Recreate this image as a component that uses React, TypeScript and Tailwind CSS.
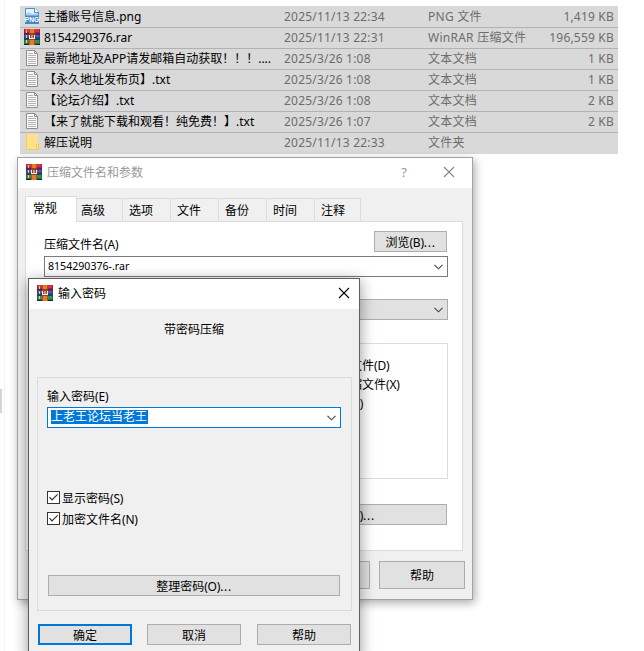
import React from 'react';

type FileKind = 'png' | 'rar' | 'txt' | 'folder';

interface FileEntry {
    name: string;
    date: string;
    type: string;
    size: string;
    kind: FileKind;
}

const files: FileEntry[] = [
    { name: '主播账号信息.png', date: '2025/11/13 22:34', type: 'PNG 文件', size: '1,419 KB', kind: 'png' },
    { name: '8154290376.rar', date: '2025/11/13 22:31', type: 'WinRAR 压缩文件', size: '196,559 KB', kind: 'rar' },
    { name: '最新地址及APP请发邮箱自动获取！！！....', date: '2025/3/26 1:08', type: '文本文档', size: '1 KB', kind: 'txt' },
    { name: '【永久地址发布页】.txt', date: '2025/3/26 1:08', type: '文本文档', size: '1 KB', kind: 'txt' },
    { name: '【论坛介绍】.txt', date: '2025/3/26 1:08', type: '文本文档', size: '2 KB', kind: 'txt' },
    { name: '【来了就能下载和观看！纯免费！】.txt', date: '2025/3/26 1:07', type: '文本文档', size: '2 KB', kind: 'txt' },
    { name: '解压说明', date: '2025/11/13 22:33', type: '文件夹', size: '', kind: 'folder' },
];

const tabs = ['高级', '选项', '文件', '备份', '时间', '注释'];

const App: React.FC = () => {
    return (
        <div className="relative h-[651px] w-[644px] overflow-hidden bg-white font-['Noto_Sans','Noto_Sans_CJK_SC',sans-serif] text-[12px] leading-none text-black whitespace-nowrap [text-spacing-trim:space-all]">
            <div className="flex h-full">
                <div className="flex w-[5px] shrink-0 items-start border-r border-[#f3f3f3] pt-[389px]">
                    <div className="h-6 w-0.5 bg-[#d5d5d5]" />
                </div>
                <div className="w-[613px] pt-[6px] pl-[15px]">
                    <div className="bg-[#d9d9d9] pt-px">
                        {files.map((file) => (
                            <FileRow key={file.name} file={file} />
                        ))}
                    </div>
                </div>
            </div>
            <ArchiveDialog />
            <PasswordDialog />
        </div>
    );
};

const FileRow: React.FC<{ file: FileEntry }> = ({ file }) => (
    <div className="flex h-[21px] items-center border-b border-[#b2b2b2] pr-1 pl-1 last:border-transparent">
        <div className="-mt-0.5">
            <FileIcon kind={file.kind} />
        </div>
        <span className="ml-1 w-[240px]">{file.name}</span>
        <span className="w-[144px] tracking-[0.2px] text-[#6d6d6d]">{file.date}</span>
        <span className="flex-1 tracking-[0.25px] text-[#6d6d6d]">{file.type}</span>
        <span className="tracking-[0.2px] text-[#6d6d6d]">{file.size}</span>
    </div>
);

// Top level options window, mostly hidden behind the password prompt
const ArchiveDialog: React.FC = () => (
    <div className="absolute top-[157px] left-[17px] flex h-[443px] w-[456px] flex-col border border-[#a3a3a3] bg-[#f0f0f0] shadow-[2px_3px_9px_rgba(0,0,0,0.32)]">
        <div className="flex h-[30px] shrink-0 items-center bg-white pl-2 text-[#999]">
            <div className="-mt-0.5">
                <RarIcon />
            </div>
            <span className="ml-[5px] flex-1">压缩文件名和参数</span>
            <span className="mr-9 -mt-0.5 text-[13px]">?</span>
            <CloseIcon className="mr-[17px] -mt-0.5 text-[#888]" />
        </div>
        <div className="mt-[9px] ml-[7px] flex h-6 shrink-0 items-end">
            <div className="z-10 -mb-px flex h-[26px] w-[52px] items-center border border-b-0 border-[#dcdcdc] bg-white pb-0.5 pl-[7px]">常规</div>
            {tabs.map((tab) => (
                <div key={tab} className="flex h-[23px] w-12 items-center border-t border-r border-[#dcdcdc] pt-0.5 pl-1.5 nth-2:w-[46px] nth-2:pl-1 last:w-[46px]">
                    {tab}
                </div>
            ))}
        </div>
        <div className="ml-[7px] flex h-[330px] w-[438px] shrink-0 flex-col border border-[#dcdcdc] bg-white pr-3.5 pl-[18px]">
            <div className="mt-[9px] flex h-[21px] justify-between">
                <span className="pt-[8px]">压缩文件名<Key>(A)</Key></span>
                <Button className="mr-px h-[21px] w-[73px]">浏览<Key>(B)</Key><Dots /></Button>
            </div>
            <div className="mt-1 flex h-[21px] shrink-0 items-center justify-between border border-[#7a7a7a] pr-1 pl-[3px]">
                <span className="text-[10.6px]">8154290376-.rar</span>
                <Chevron />
            </div>
            <div className="mt-[22px] flex h-[21px] w-[220px] shrink-0 items-center justify-end self-end border border-[#adadad] bg-[#e1e1e1] pr-1">
                <Chevron />
            </div>
            <div className="mt-[23px] flex h-[136px] w-[220px] shrink-0 flex-col gap-[6px] self-end border border-[#dcdcdc] pt-[14px] pl-2.5">
                <Option label="压缩后删除原来的文件" hotkey="(D)" />
                <Option label="创建自解压格式压缩文件" hotkey="(X)" />
                <Option label="创建固实压缩文件" hotkey="(S)" />
            </div>
            <Button className="mt-[25px] mr-px h-[21px] w-[218px] self-end">设置密码<Key>(P)</Key><Dots /></Button>
        </div>
        <div className="mt-2.5 flex h-7 shrink-0 justify-end gap-[9px] pr-[7px]">
            <Button className="w-[86px]">取消</Button>
            <Button className="w-[86px]">帮助</Button>
        </div>
    </div>
);

const PasswordDialog: React.FC = () => (
    <div className="absolute top-[278px] left-[28px] flex h-[380px] w-[332px] flex-col border border-[#5f5f5f] bg-[#f0f0f0] shadow-[0_3px_14px_rgba(0,0,0,0.42)]">
        <div className="flex h-[30px] shrink-0 items-center bg-white pl-2">
            <div className="-mt-0.5">
                <RarIcon />
            </div>
            <span className="ml-[5px] flex-1">输入密码</span>
            <CloseIcon className="mr-[9px] -mt-0.5 text-black" />
        </div>
        <div className="flex h-[68px] shrink-0 justify-center pt-[15px]">带密码压缩</div>
        <div className="ml-2 flex h-[234px] w-[315px] shrink-0 flex-col border border-[#dcdcdc] pl-[9px]">
            <span className="mt-[13px] h-4">输入密码<Key>(E)</Key></span>
            <div className="flex h-[21px] w-[294px] shrink-0 items-center justify-between border border-[#0078d7] bg-white pr-1 pl-[3px]">
                <span className="-mt-px flex h-[14px] w-[97px] items-center bg-[#0078d7] text-white">上老王论坛当老王</span>
                <Chevron />
            </div>
            <div className="mt-[63px] flex flex-col gap-2">
                <Option label="显示密码" hotkey="(S)" />
                <Option label="加密文件名" hotkey="(N)" />
            </div>
            <Button className="mt-[50px] ml-px h-[21px] w-[292px]">整理密码<Key>(O)</Key><Dots /></Button>
        </div>
        <div className="mt-[13px] ml-[9px] flex h-[21px] shrink-0">
            <Button primary className="w-[94px]">确定</Button>
            <Button className="ml-[15px] w-[94px]">取消</Button>
            <Button className="ml-4 w-[94px]">帮助</Button>
        </div>
    </div>
);

const Key: React.FC<{ children: React.ReactNode }> = ({ children }) => (
    <span className="tracking-[-0.2px]">{children}</span>
);

const Dots: React.FC = () => <span className="tracking-[0.7px]">...</span>;

const Option: React.FC<{ label: string; hotkey: string }> = ({ label, hotkey }) => (
    <label className="flex h-[13px] items-center">
        <svg width="13" height="13" viewBox="0 0 13 13" fill="none" className="shrink-0">
            <rect x=".5" y=".5" width="12" height="12" fill="#fff" stroke="#333" />
            <path d="M2.5 6.2 5 8.9 10.6 3.3" stroke="#333" strokeWidth="1.2" />
        </svg>
        <span className="mt-0.5 ml-0.5">{label}<Key>{hotkey}</Key></span>
    </label>
);

const Button: React.FC<{ children: React.ReactNode; className?: string; primary?: boolean }> = ({ children, className = '', primary }) => (
    <button className={`flex shrink-0 items-center justify-center bg-[#e1e1e1] ${primary ? 'border-2 border-[#0078d7]' : 'border border-[#adadad]'} ${className}`}>
        <span className="mt-0.5">{children}</span>
    </button>
);

const Chevron: React.FC = () => (
    <svg width="9" height="6" viewBox="0 0 9 6" fill="none" stroke="#444" strokeWidth="1.1">
        <path d="M.5 .8 4.5 4.8 8.5 .8" />
    </svg>
);

const CloseIcon: React.FC<{ className: string }> = ({ className }) => (
    <svg width="12" height="12" viewBox="0 0 12 12" className={className} fill="none" stroke="currentColor" strokeWidth="1.1">
        <path d="M1 1 11 11M11 1 1 11" />
    </svg>
);

const RarIcon: React.FC = () => (
    <svg width="16" height="16" viewBox="0 0 16 16" className="shrink-0">
        <path fill="#a91f3c" d="M0 0h16v5H0z" />
        <path fill="#d8304f" d="M1 0h14v3H1z" />
        <path fill="#413a94" d="M0 5h16v5H0z" />
        <path fill="#5b55ba" d="M1 6h14v2H1z" />
        <path fill="#147342" d="M0 10h16v6H0z" />
        <path fill="#27985a" d="M1 11h14v3H1z" />
        <path fill="#262032" d="M0 4.5h16v.8H0zM0 9.8h16v.8H0zM0 15h16v1H0z" />
        <path fill="#f0d080" d="M2 1h1v3H2zM2 6h1v3H2zM2 11h1v3H2z" />
        <path fill="#b94b15" d="M5 0h6v16H5z" />
        <path fill="#e97924" d="M6 0h4v16H6z" />
        <path fill="#8d4527" d="M5 4h6v7H5z" />
        <path fill="#f8efe6" d="M5 6h1v3h1.5V6h1v3H10V6h1v4H5z" />
    </svg>
);

const FileIcon: React.FC<{ kind: FileKind }> = ({ kind }) => {
    if (kind === 'rar') return <RarIcon />;
    if (kind === 'png') {
        return (
            <svg width="16" height="16" viewBox="0 0 16 16" className="shrink-0">
                <path d="M1.5 .5h9.5l3.5 3.5v11.5h-13z" fill="#e6f3fc" stroke="#4b8fcc" />
                <path d="M2 6 5 4l3 2 6-1v3H2z" fill="#a8d2ef" />
                <path d="M10.5 0v4.5H15" fill="#fff" stroke="#4b8fcc" />
                <path d="M1 7.5h14V16H1z" fill="#4488c8" />
                <text x="8" y="14.3" textAnchor="middle" fontSize="6.6" fontWeight="700" fill="#fff" fontFamily="Liberation Sans, sans-serif">PNG</text>
            </svg>
        );
    }
    if (kind === 'folder') {
        return (
            <svg width="16" height="16" viewBox="0 0 16 16" className="shrink-0">
                <path d="M2 0h11.5v10H15v6H2z" fill="#ffe18c" />
                <path d="M2.5 0v15.5h10V10" fill="none" stroke="#f3cb58" />
                <path d="M12.5 15.5h2V10" fill="none" stroke="#f0c550" />
            </svg>
        );
    }
    return (
        <svg width="16" height="16" viewBox="0 0 16 16" className="shrink-0">
            <path d="M2.5 .5h8l3 3v12h-11z" fill="#fbfbfb" stroke="#8c8c8c" />
            <path d="M10.5 .5v3h3" fill="none" stroke="#8c8c8c" />
            <path d="M4 3.5h5M4 5.5h8M4 7.5h8M4 9.5h8M4 11.5h8M4 13.5h8" stroke="#a0a0a0" strokeWidth=".8" />
        </svg>
    );
};

export default App;
